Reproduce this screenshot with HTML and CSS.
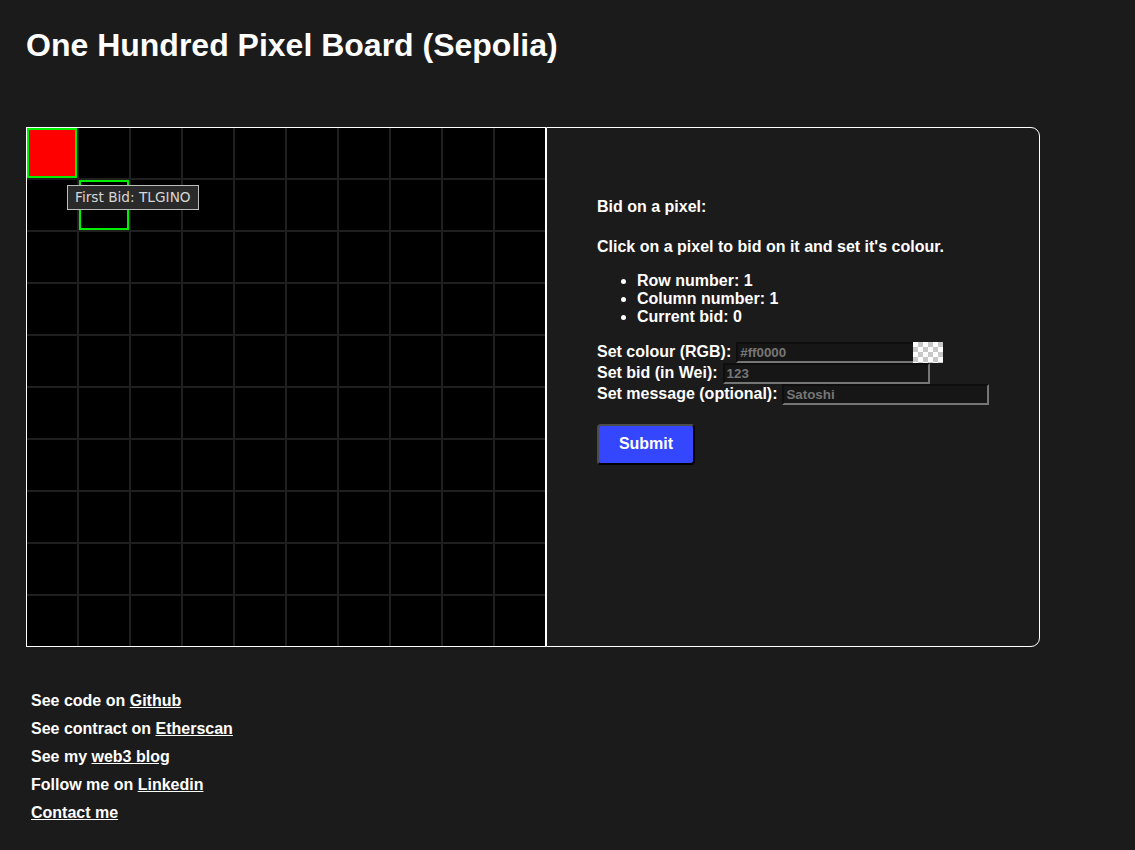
FILE: index.html
```html
<!DOCTYPE html>
<html>
<head>
<meta charset="utf-8">
<title>One Hundred Pixel Board</title>
<link rel="stylesheet" href="styles.css">
</head>
<body>
<div class="page">
  <h1 class="title">One Hundred Pixel Board (Sepolia)</h1>
  <div class="board">
    <div class="grid">
      <i class="sel"></i><i></i><i></i><i></i><i></i><i></i><i></i><i></i><i></i><i></i>
      <i></i><i class="hover"></i><i></i><i></i><i></i><i></i><i></i><i></i><i></i><i></i>
      <i></i><i></i><i></i><i></i><i></i><i></i><i></i><i></i><i></i><i></i>
      <i></i><i></i><i></i><i></i><i></i><i></i><i></i><i></i><i></i><i></i>
      <i></i><i></i><i></i><i></i><i></i><i></i><i></i><i></i><i></i><i></i>
      <i></i><i></i><i></i><i></i><i></i><i></i><i></i><i></i><i></i><i></i>
      <i></i><i></i><i></i><i></i><i></i><i></i><i></i><i></i><i></i><i></i>
      <i></i><i></i><i></i><i></i><i></i><i></i><i></i><i></i><i></i><i></i>
      <i></i><i></i><i></i><i></i><i></i><i></i><i></i><i></i><i></i><i></i>
      <i></i><i></i><i></i><i></i><i></i><i></i><i></i><i></i><i></i><i></i>
    </div>
    <div class="tooltip">First Bid: TLGINO</div>
    <div class="panel">
      <h4 class="panel-head">Bid on a pixel:</h4>
      <p class="panel-text">Click on a pixel to bid on it and set it's colour.</p>
      <ul class="info">
        <li>Row number: 1</li>
        <li>Column number: 1</li>
        <li>Current bid: 0</li>
      </ul>
      <form class="bid-form">
        <div class="row">
          <label class="lbl">Set colour (RGB):</label>
          <span class="colour-field"><input class="field field-colour" type="text" placeholder="#ff0000"><span class="swatch"></span></span>
        </div>
        <div class="row">
          <label class="lbl">Set bid (in Wei):</label>
          <input class="field" type="text" placeholder="123">
        </div>
        <div class="row">
          <label class="lbl">Set message (optional):</label>
          <input class="field" type="text" placeholder="Satoshi">
        </div>
        <button class="submit" type="button">Submit</button>
      </form>
    </div>
  </div>
  <div class="links">
    <div class="link-item">See code on <a href="#">Github</a></div>
    <div class="link-item">See contract on <a href="#">Etherscan</a></div>
    <div class="link-item">See my <a href="#">web3 blog</a></div>
    <div class="link-item">Follow me on <a href="#">Linkedin</a></div>
    <div class="link-item"><a href="#">Contact me</a></div>
  </div>
</div>
</body>
</html>
```
FILE: styles.css
```css
html, body {
  margin: 0;
  padding: 0;
  background: #1b1b1b;
}
body {
  color: #fff;
  font-family: "Liberation Sans", Arial, sans-serif;
  font-weight: bold;
  font-size: 16px;
}
.page {
  padding: 0 26px;
}
.title {
  font-size: 32px;
  font-weight: bold;
  margin: 0;
  padding-top: 27px;
  height: 127px;
  box-sizing: border-box;
  line-height: 36.8px;
}
.board {
  position: relative;
  display: flex;
  width: 1014px;
}
.grid {
  display: grid;
  grid-template-columns: repeat(10, 50px);
  grid-template-rows: repeat(10, 50px);
  gap: 2px;
  width: 518px;
  height: 518px;
  background: #1f1f1f;
  border: 1px solid #fff;
  flex: none;
}
.grid i {
  display: block;
  background: #000;
  box-sizing: border-box;
}
.grid i.sel {
  background: #ff0000;
  border: 2px solid #00ee00;
}
.grid i.hover {
  border: 2px solid #00ee00;
}
.tooltip {
  position: absolute;
  left: 41px;
  top: 58px;
  background: #2a2a2a;
  border: 1px solid #bdbdbd;
  color: #d6d6d6;
  font-family: "DejaVu Sans", sans-serif;
  font-weight: normal;
  font-size: 13.7px;
  line-height: 15px;
  padding: 4px 7px 4px 7px;
  white-space: nowrap;
}
.panel {
  width: 494px;
  box-sizing: border-box;
  border: 1px solid #fff;
  border-radius: 0 9px 9px 0;
  padding: 49px 50px;
}
.panel-head {
  font-size: 16px;
  margin: 21.28px 0;
}
.panel-text {
  margin: 16px 0;
}
.info {
  margin: 16px 0;
  padding-left: 40px;
}
.bid-form {
  margin: 0;
}
.row {
  display: flex;
  align-items: center;
  height: 21px;
  gap: 5px;
}
.lbl {
  white-space: nowrap;
}
.colour-field {
  display: flex;
}
.field {
  width: 207px;
  height: 21px;
  box-sizing: border-box;
  background: #161616;
  border-width: 2px;
  border-style: solid;
  border-color: #0e0e0e #767676 #767676 #0e0e0e;
  padding: 1px 2px;
  font-family: "Liberation Sans", Arial, sans-serif;
  font-weight: bold;
  font-size: 13.33px;
  color: #fff;
  margin: 0;
}
.field::placeholder {
  color: #767676;
}
.field-colour {
  width: 177px;
  border-right: none;
}
.swatch {
  width: 30px;
  height: 21px;
  background: repeating-conic-gradient(#c8c8c8 0 25%, #ffffff 0 50%) 0 0 / 10px 10px;
}
.submit {
  margin-top: 19px;
  width: 98px;
  height: 41px;
  background: #3446fe;
  color: #fff;
  font-family: "Liberation Sans", Arial, sans-serif;
  font-weight: bold;
  font-size: 16px;
  border-width: 2px;
  border-style: solid;
  border-color: #4c4c4c #000 #000 #4c4c4c;
  border-radius: 4px;
  padding: 0;
}
.links {
  margin-top: 40px;
}
.link-item {
  padding: 5px;
  line-height: 18px;
}
.link-item a {
  color: #fff;
  text-decoration: underline;
}
```
